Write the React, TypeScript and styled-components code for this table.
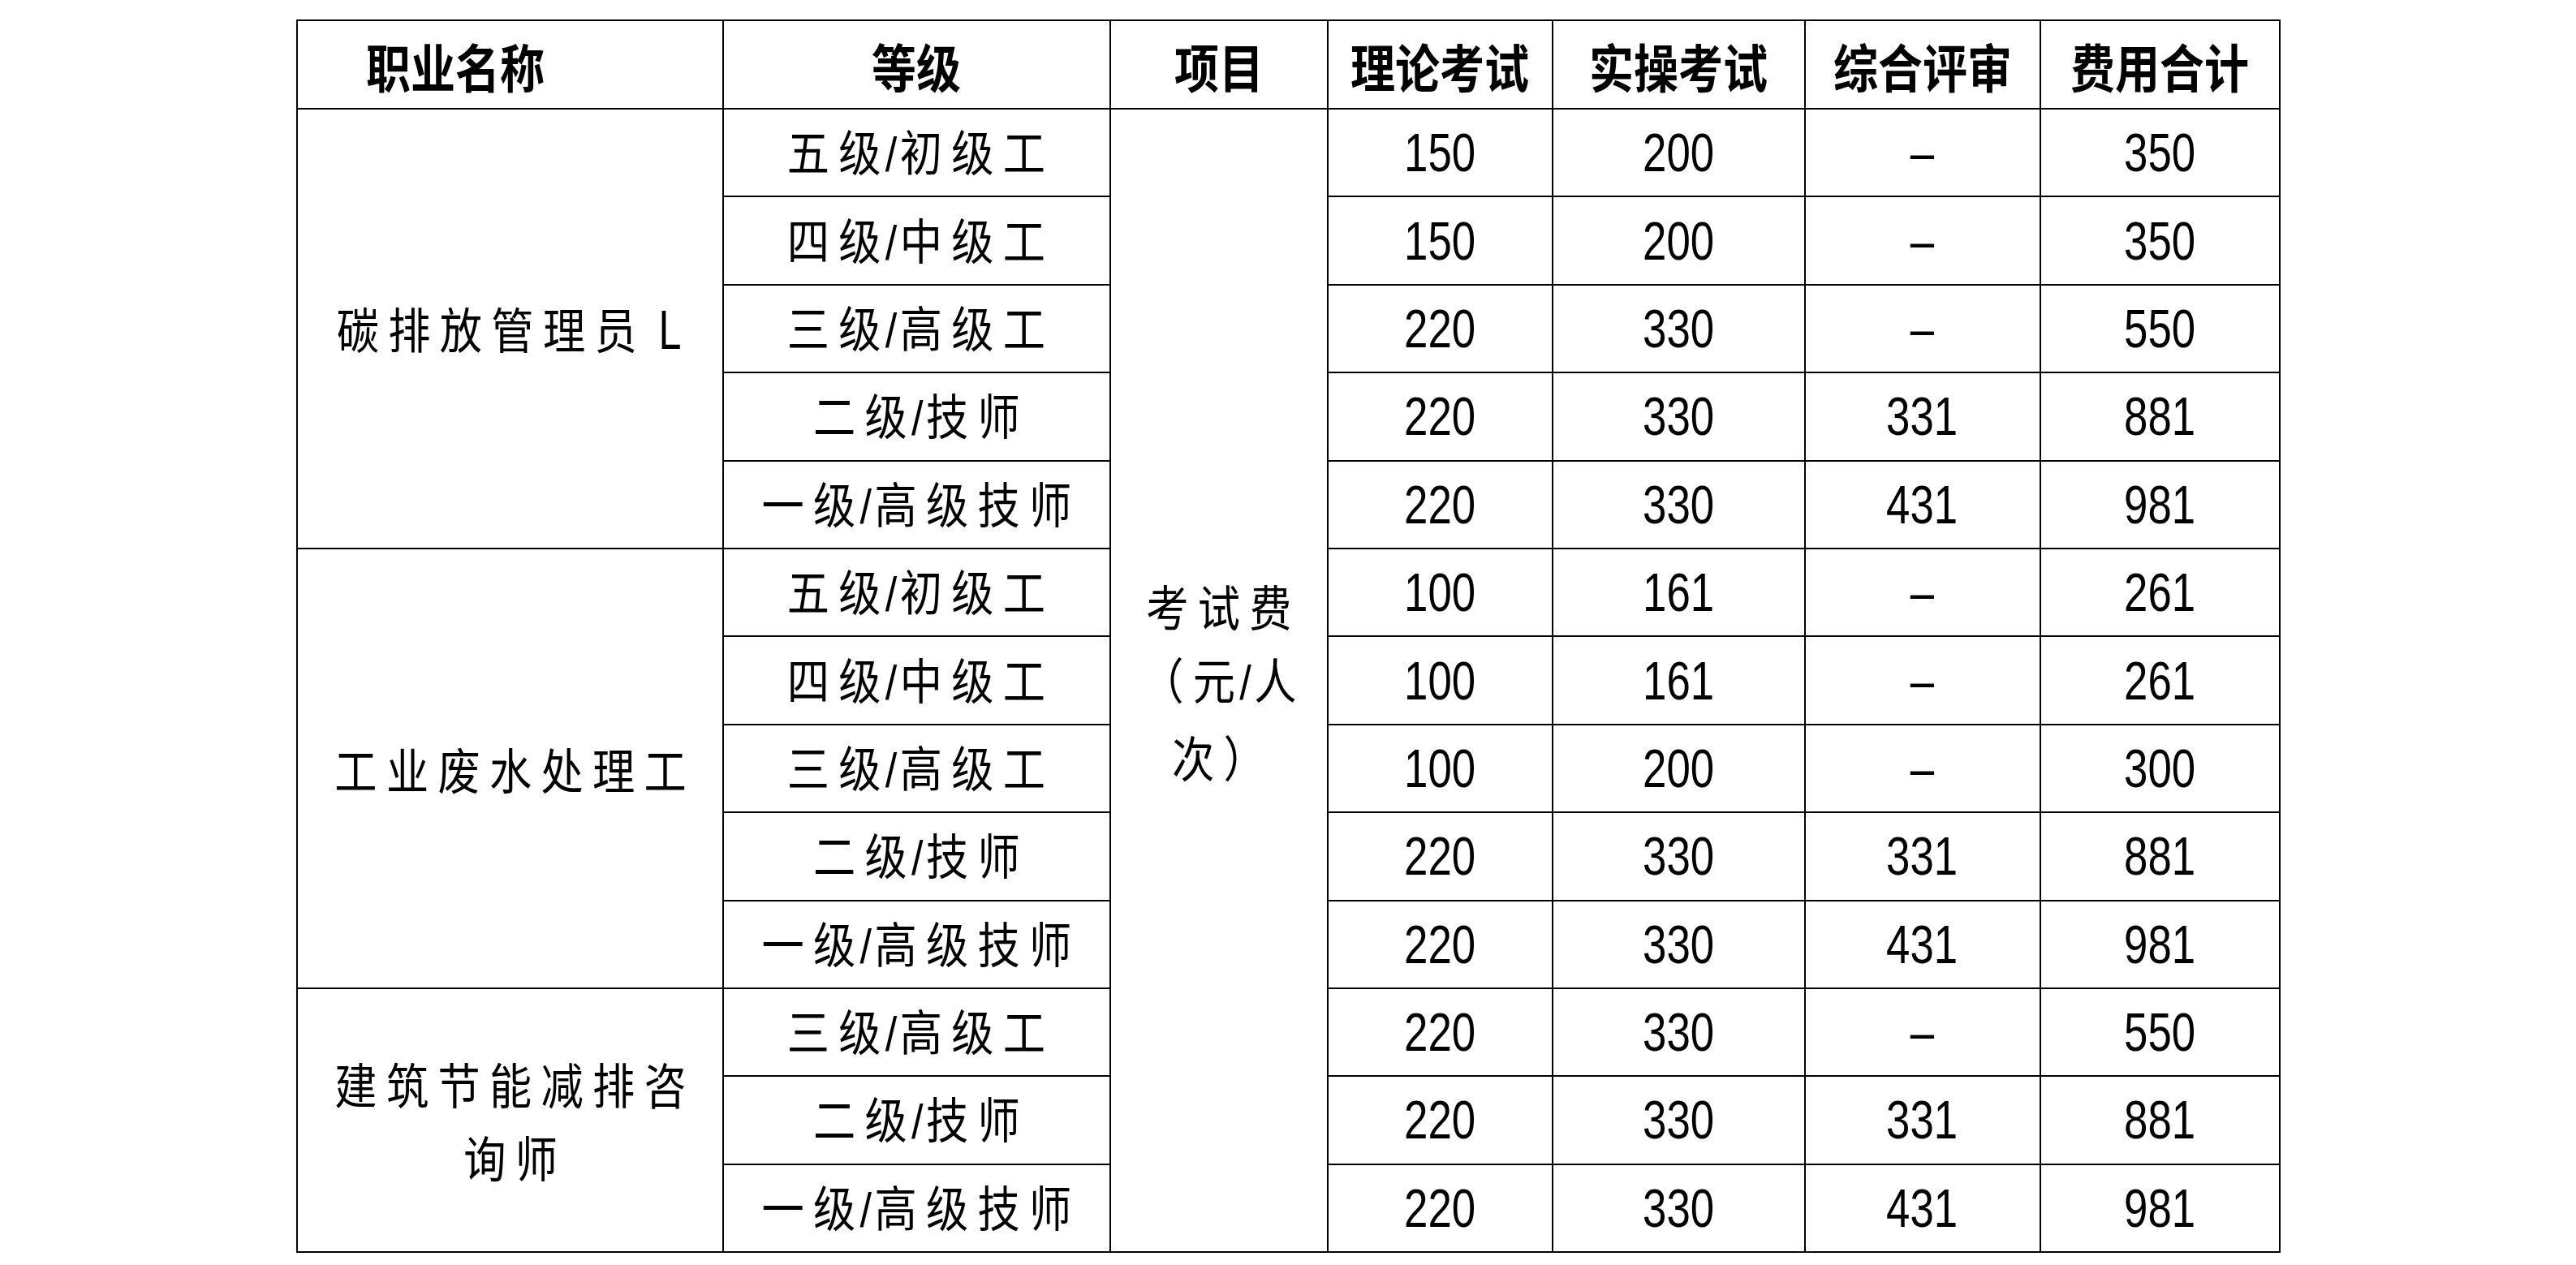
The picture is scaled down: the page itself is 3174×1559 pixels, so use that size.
import React from "react";
import styled, { createGlobalStyle } from "styled-components";

const GlobalStyle = createGlobalStyle`
  html, body {
    margin: 0;
    padding: 0;
    background: #fff;
  }
  body {
    color: #000;
    font-family: "Noto Sans CJK SC", sans-serif;
  }
`;

const Page = styled.div`
  display: flex;
  justify-content: center;
  align-items: flex-start;
  box-sizing: border-box;
  min-height: 1559px;
  padding-top: 24px;
`;

const Table = styled.table`
  border-collapse: collapse;
  table-layout: fixed;
  width: 2443px;
`;

const HeadRow = styled.tr`
  height: 109px;
`;

const BodyRow = styled.tr`
  height: 108.4px;
`;

const HeadCell = styled.th<{ $left?: boolean }>`
  border: 2px solid #000;
  padding: 0 0 0 ${p => (p.$left ? "84px" : "0")};
  text-align: ${p => (p.$left ? "left" : "center")};
  vertical-align: middle;
  font-family: "Noto Sans CJK SC", sans-serif;
  font-weight: 700;
  font-size: 64px;
  line-height: 1;
  white-space: nowrap;
`;

const HeadText = styled.span<{ $left?: boolean }>`
  display: inline-block;
  transform: scaleX(0.86);
  transform-origin: ${p => (p.$left ? "left" : "center")} center;
`;

const TextCell = styled.td`
  border: 2px solid #000;
  padding: 0;
  text-align: center;
  vertical-align: middle;
  font-family: "Noto Sans CJK SC", sans-serif;
  font-weight: 400;
  font-size: 60px;
  line-height: 90px;
`;

const BodyText = styled.span`
  display: inline-block;
  padding-left: 13px;
  letter-spacing: 13px;
  white-space: nowrap;
  transform: scaleX(0.87);
`;

const Slash = styled.span`
  display: inline-block;
  margin: 0 4px 0 -7px;
  letter-spacing: 0;
  font-family: "Liberation Sans", sans-serif;
`;

const Suffix = styled.span`
  display: inline-block;
  margin-left: 14px;
  font-family: "Liberation Sans", sans-serif;
  font-size: 68px;
  font-weight: 300;
  transform: scaleX(0.85);
`;

const NumCell = styled.td`
  border: 2px solid #000;
  padding: 0;
  text-align: center;
  vertical-align: middle;
  font-family: "Liberation Sans", Arial, sans-serif;
  font-size: 66px;
  line-height: 1;
`;

const NumText = styled.span`
  display: inline-block;
  transform: scaleX(0.8);
`;

function withSlash(text: string) {
  const parts = text.split("/");
  return parts.map((part, i) => (
    <React.Fragment key={i}>
      {i > 0 && <Slash>/</Slash>}
      {part}
    </React.Fragment>
  ));
}

type Fee = number | null;
type Level = [string, Fee, Fee, Fee, Fee];

interface Group {
  name: React.ReactNode;
  levels: Level[];
}

const GROUPS: Group[] = [
  {
    name: <>碳排放管理员<Suffix>L</Suffix></>,
    levels: [
      ["五级/初级工", 150, 200, null, 350],
      ["四级/中级工", 150, 200, null, 350],
      ["三级/高级工", 220, 330, null, 550],
      ["二级/技师", 220, 330, 331, 881],
      ["一级/高级技师", 220, 330, 431, 981],
    ],
  },
  {
    name: "工业废水处理工",
    levels: [
      ["五级/初级工", 100, 161, null, 261],
      ["四级/中级工", 100, 161, null, 261],
      ["三级/高级工", 100, 200, null, 300],
      ["二级/技师", 220, 330, 331, 881],
      ["一级/高级技师", 220, 330, 431, 981],
    ],
  },
  {
    name: <>建筑节能减排咨<br />询师</>,
    levels: [
      ["三级/高级工", 220, 330, null, 550],
      ["二级/技师", 220, 330, 331, 881],
      ["一级/高级技师", 220, 330, 431, 981],
    ],
  },
];

const HEADERS = ["职业名称", "等级", "项目", "理论考试", "实操考试", "综合评审", "费用合计"];
const COL_WIDTHS = [525, 477, 268, 277, 311, 290, 295];
const TOTAL_ROWS = GROUPS.reduce((n, g) => n + g.levels.length, 0);

export default function App() {
  return (
    <>
      <GlobalStyle />
      <Page>
        <Table>
          <colgroup>
            {COL_WIDTHS.map((w, i) => (
              <col key={i} style={{ width: w }} />
            ))}
          </colgroup>
          <thead>
            <HeadRow>
              {HEADERS.map((h, i) => (
                <HeadCell key={h} $left={i === 0}>
                  <HeadText $left={i === 0}>{h}</HeadText>
                </HeadCell>
              ))}
            </HeadRow>
          </thead>
          <tbody>
            {GROUPS.map((group, gi) =>
              group.levels.map((level, li) => {
                const [grade, ...fees] = level;
                return (
                  <BodyRow key={`${gi}-${li}`}>
                    {li === 0 && (
                      <TextCell rowSpan={group.levels.length}>
                        <BodyText>{group.name}</BodyText>
                      </TextCell>
                    )}
                    <TextCell>
                      <BodyText>{withSlash(grade)}</BodyText>
                    </TextCell>
                    {gi === 0 && li === 0 && (
                      <TextCell rowSpan={TOTAL_ROWS}>
                        <BodyText>
                          考试费
                          <br />
                          （元{withSlash("/")[1]}人
                          <br />
                          次）
                        </BodyText>
                      </TextCell>
                    )}
                    {fees.map((fee, fi) => (
                      <NumCell key={fi}>
                        <NumText>{fee === null ? "–" : fee}</NumText>
                      </NumCell>
                    ))}
                  </BodyRow>
                );
              })
            )}
          </tbody>
        </Table>
      </Page>
    </>
  );
}
